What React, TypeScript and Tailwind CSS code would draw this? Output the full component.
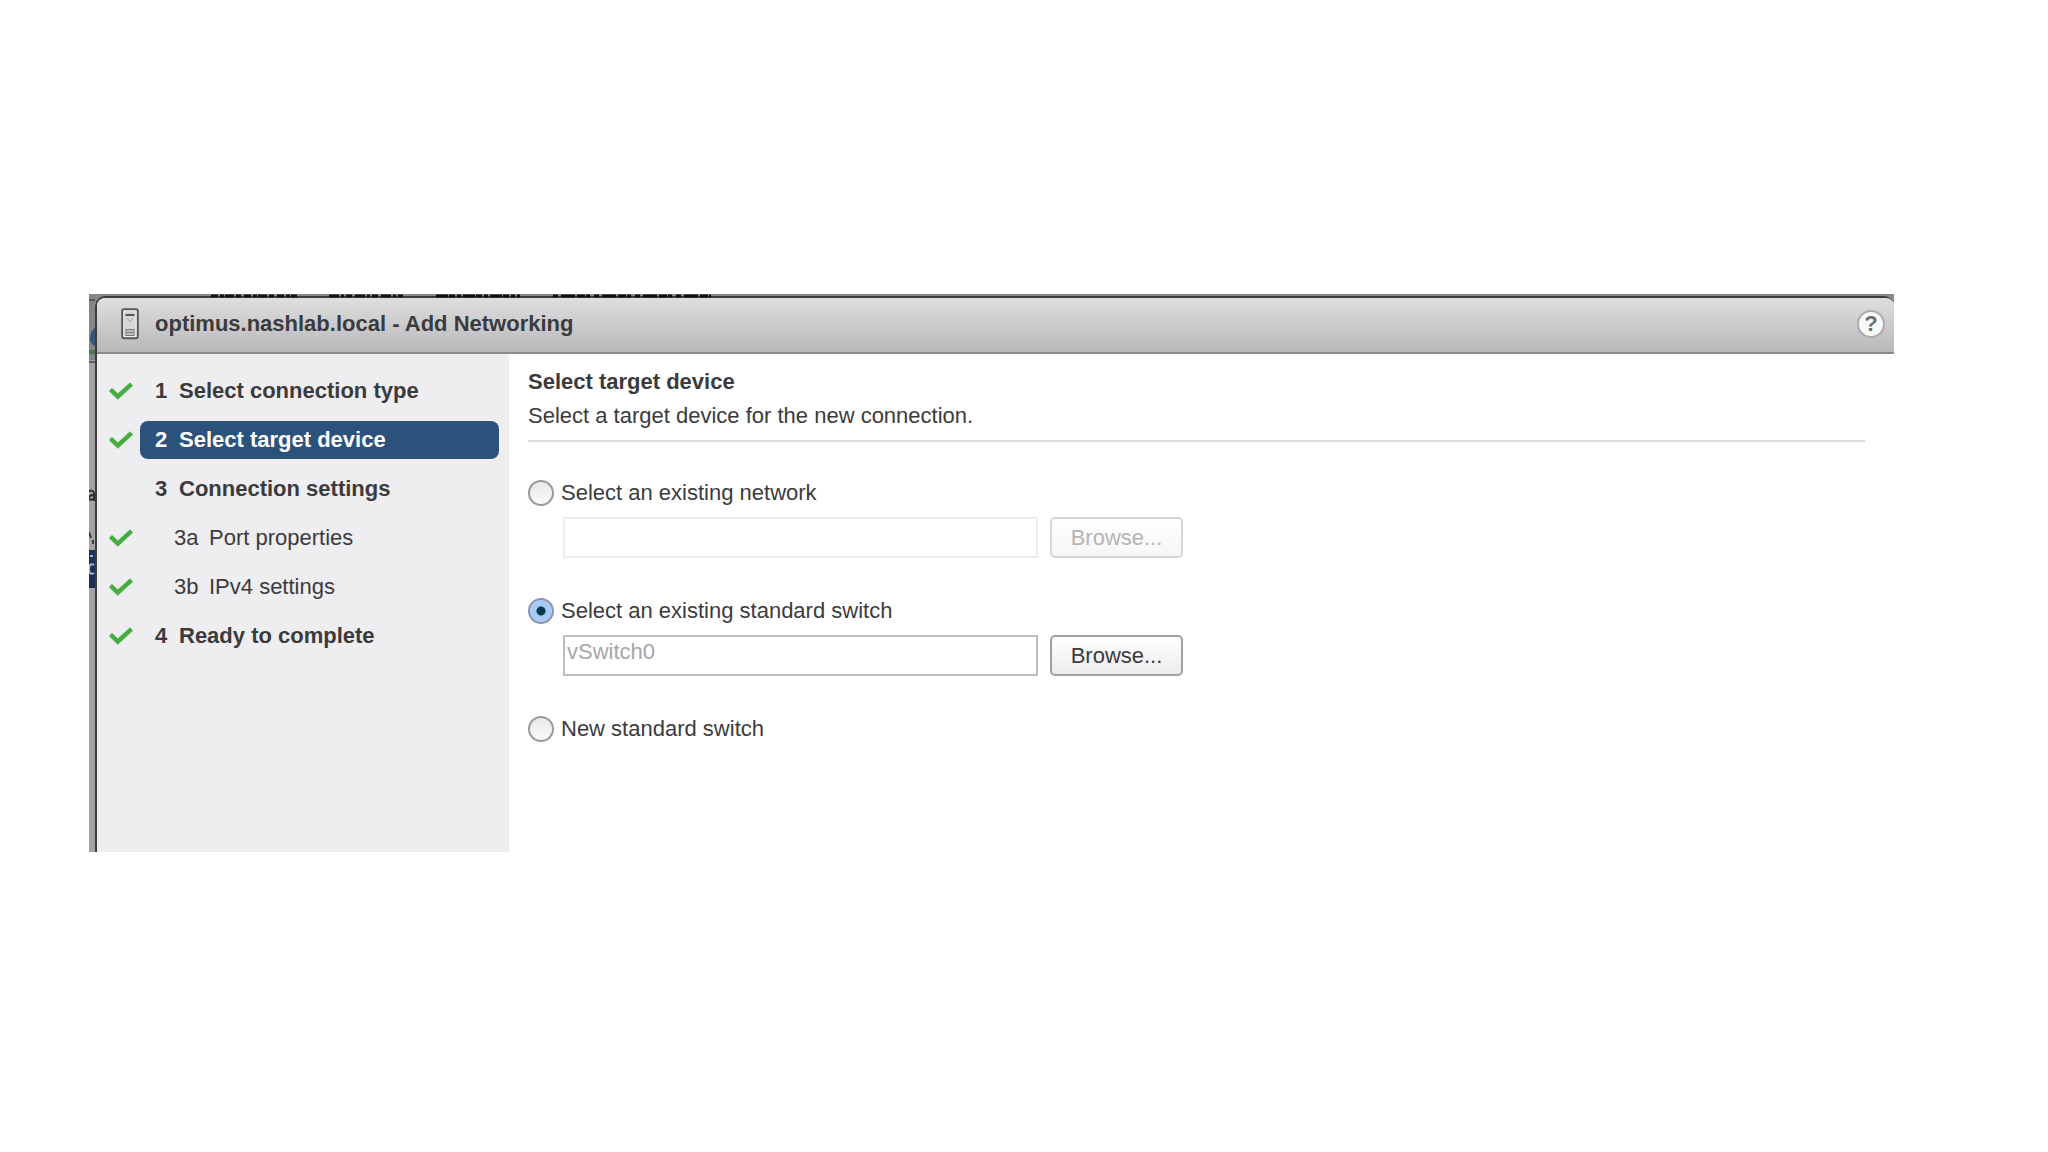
import React from "react";

type Step = { num: string; label: string; done: boolean; active?: boolean; sub?: boolean };

const steps: Step[] = [
  { num: "1", label: "Select connection type", done: true },
  { num: "2", label: "Select target device", done: true, active: true },
  { num: "3", label: "Connection settings", done: false },
  { num: "3a", label: "Port properties", done: true, sub: true },
  { num: "3b", label: "IPv4 settings", done: true, sub: true },
  { num: "4", label: "Ready to complete", done: true },
];

function Check() {
  return (
    <svg width="24" height="18" viewBox="0 0 24 18" fill="none" aria-hidden="true">
      <path d="M1.5 8 8.800 14.500 22.500 2.200" stroke="#8fdc86" strokeWidth="5.400" opacity="0.45" />
      <path d="M1.5 7.500 8.800 14.500 22.500 2" stroke="#46ab42" strokeWidth="4.200" />
    </svg>
  );
}

function HostIcon() {
  return (
    <svg width="18" height="32" viewBox="0 0 18 32" fill="none" aria-hidden="true">
      <rect x="1.2" y="1.2" width="15.6" height="29" rx="2" fill="#d6d6d7" stroke="#5a5a5c" strokeWidth="2" />
      <rect x="3" y="3" width="12" height="25.500" stroke="#ececec" />
      <path d="M4.500 7h9" stroke="#333" strokeWidth="1.6" />
      <path d="M6.500 10.500 9 14l2.500-3.500" stroke="#a4a4a4" />
      <rect x="5" y="21.500" width="8" height="6" fill="#c0c0c0" stroke="#7b7b7b" />
      <path d="M6 24.500h6" stroke="#7b7b7b" />
    </svg>
  );
}

/* Slivers of the dimmed page that remain visible behind the dialog. */
function BackdropSlivers() {
  return (
    <>
      <svg className="absolute top-0 left-0" width="6" height="310" fill="none" aria-hidden="true">
        <rect width="6" height="66" fill="#858587" />
        <path d="M0 6h6" stroke="#5c5c5e" strokeWidth="2" />
        <path d="M6 34C3 36 1 40 1 44s2 7 5 8z" fill="#36557c" />
        <path d="M0 58h6" stroke="#4d7a4c" strokeWidth="4" />
        <path d="M0 68h6" stroke="#5c5c5e" strokeWidth="2" />
        <path d="M0 197c3-1 5 0 5 3v7M5 201c-3 0-5 1-5 3s2 2 5 1" stroke="#2c2c2e" strokeWidth="2" />
        <path d="M0 238 2 244M4 246v4" stroke="#3a3a3c" strokeWidth="2" />
        <rect y="256" width="6" height="38" fill="#1b2f58" />
        <path d="M5 271c-3-2-5 0-5 4s2 6 5 4M1 262h3" stroke="#a9b6cf" strokeWidth="2" />
      </svg>
      <svg className="absolute top-0 left-0" width="640" height="4" fill="none" aria-hidden="true">
        <path d="M122 2h86" stroke="#151515" strokeWidth="3" strokeDasharray="7 2 4 1 9 2 5 3" />
        <path d="M240 2h74" stroke="#151515" strokeWidth="3" strokeDasharray="10 2 3 2 6 3" />
        <path d="M347 2h84" stroke="#101010" strokeWidth="3" strokeDasharray="12 1 6 2 4 2" />
        <path d="M464 2h158" stroke="#101010" strokeWidth="3" strokeDasharray="5 3 14 2 8 1 4 4" />
      </svg>
    </>
  );
}

function StepRow({ step }: { step: Step }) {
  return (
    <li className="flex items-center gap-[7px]">
      <span className="flex w-6 shrink-0">{step.done && <Check />}</span>
      <a
        href="#"
        aria-current={step.active ? "step" : undefined}
        className={
          "flex h-[38px] grow items-center rounded-lg " +
          (step.sub ? "pl-[34px] " : "pl-[15px] font-bold ") +
          (step.active ? "bg-[#2b527b] text-white" : "")
        }
      >
        <span className={step.sub ? "w-[35px]" : "w-6"}>{step.num}</span>
        {step.label}
      </a>
    </li>
  );
}

const radioClass =
  "size-[26px] shrink-0 appearance-none rounded-full border-2 border-[#9a9a9c] bg-[linear-gradient(#e8e8ea,#fafafa)] checked:border-[#8b95ab] checked:bg-[radial-gradient(circle,#0c3550_0_4px,#a3c8f3_5px,#b4cff8_100%)]";

function Option({ id, label, value, checked }: { id: string; label: string; value?: string; checked?: boolean }) {
  return (
    <div>
      <div className="flex items-center gap-[7px]">
        <input type="radio" id={id} name="target" defaultChecked={checked} className={radioClass} />
        <label htmlFor={id}>{label}</label>
      </div>
      {value !== undefined && (
        <div className="mt-[11px] ml-[35px] flex gap-3">
          <input
            type="text"
            aria-label={label}
            defaultValue={value}
            disabled={!checked}
            className="h-[41px] w-[475px] border-2 border-[#bdbdbf] bg-white px-0.5 pb-2 text-[#a6a6a8] disabled:border-[#ececf0]"
          />
          <button
            type="button"
            disabled={!checked}
            className="h-[41px] w-[133px] rounded-[5px] border-2 border-[#a0a0a2] bg-linear-to-b from-white to-[#ececee] disabled:border-[#d6d6d8] disabled:to-[#f6f6f8] disabled:text-[#b4b4b6]"
          >
            Browse...
          </button>
        </div>
      )}
    </div>
  );
}

export default function App() {
  return (
    <div className="min-h-screen bg-white pt-[294px] pr-[154px] pl-[89px] font-['Liberation_Sans',Arial,sans-serif] text-[22px] leading-[26px] text-[#3b3b3d]">
      <main className="relative overflow-hidden bg-[linear-gradient(90deg,#a3a3a5_8px,#fff_8px)]">
        <div className="h-2 bg-[#8a8a8c]" />
        <BackdropSlivers />
        <div className="-mt-1.5 ml-1.5 rounded-t-[10px] border-t-2 border-l-2 border-[#3c3c3e]">
          <header className="flex h-14 items-center rounded-t-lg border-b-2 border-[#8c8c8e] bg-linear-to-b from-[#dededf] to-[#b9b9bc] pr-[9px] pb-0.5 pl-6">
            <HostIcon />
            <h1 className="ml-4 grow font-bold">optimus.nashlab.local - Add Networking</h1>
            <button
              type="button"
              aria-label="Help"
              className="size-7 rounded-full border-2 border-[#acacae] bg-[#f8f8f8] text-[22px] leading-6 font-bold text-[#6c6c6e]"
            >
              ?
            </button>
          </header>
          <div className="flex">
            <nav className="w-[412px] shrink-0 bg-[#eeedf0] pt-[18px] pr-2.5 pb-[197px] pl-3">
              <ol className="flex flex-col gap-[11px]">
                {steps.map((s) => (
                  <StepRow key={s.num} step={s} />
                ))}
              </ol>
            </nav>
            <section className="grow bg-white pt-[15px] pr-[29px] pl-[19px]">
              <h2 className="font-bold">Select target device</h2>
              <p className="mt-2 border-b-2 border-[#dcdcde] pb-[11px]">Select a target device for the new connection.</p>
              <div className="mt-[38px] flex flex-col gap-10">
                <Option id="network" label="Select an existing network" value="" />
                <Option id="switch" label="Select an existing standard switch" value="vSwitch0" checked />
                <Option id="new" label="New standard switch" />
              </div>
            </section>
          </div>
        </div>
      </main>
    </div>
  );
}
